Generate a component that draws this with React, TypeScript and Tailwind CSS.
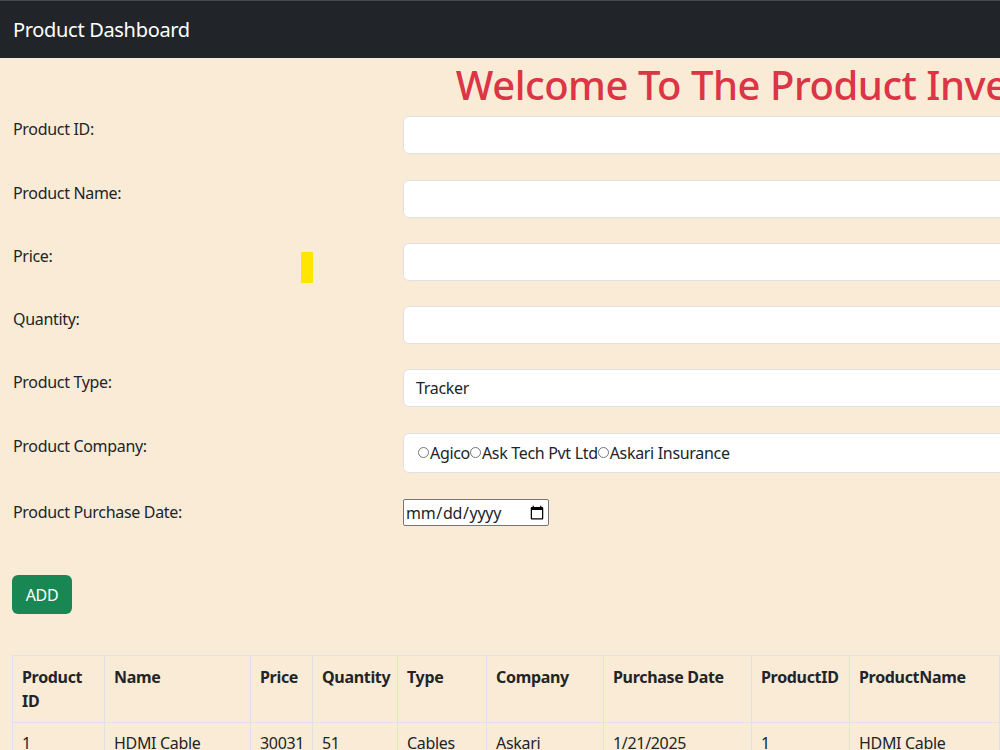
import React from 'react';

interface Product {
  id: number;
  name: string;
  price: number;
  quantity: number;
  type: string;
  company: string;
  date: string;
}

const products: Product[] = [
  { id: 1, name: 'HDMI Cable', price: 30031, quantity: 51, type: 'Cables', company: 'Askari', date: '1/21/2025' },
];

const fields = ['Product ID:', 'Product Name:', 'Price:', 'Quantity:'];

const companies = ['Agico', 'Ask Tech Pvt Ltd', 'Askari Insurance'];

const headers = [
  'Product ID', 'Name', 'Price', 'Quantity', 'Type', 'Company', 'Purchase Date',
  'ProductID', 'ProductName', 'ProductPrice', 'ProductQuantity', 'Actions',
];

export default function App() {
  return (
    <div
      className="w-screen h-screen overflow-hidden bg-[#faebd7] text-[#212529] tracking-[-0.02em]"
      style={{ fontFamily: '"Noto Sans", "Open Sans", sans-serif' }}
    >
      <div className="w-[1564px]">
        <nav className="h-[58px] bg-[#212529] border-t border-[#45484d] flex items-center px-[13px] pt-px">
          <span className="text-white text-[20px] leading-[30px]">Product Dashboard</span>
        </nav>

        <div className="px-3">
          <h1 className="text-center text-[#dc3545] text-[40px] leading-[48px] font-medium mt-[3px] mb-[7px] tracking-[-0.012em]">
            Welcome To The Product Inventory
          </h1>

          {fields.map((label, i) => (
            <div key={label} className={`flex items-start ${i === 0 ? 'mb-[26px]' : 'mb-[25px]'}`}>
              <div className="w-[391px] grid grid-cols-[289px_12px] text-[16px] leading-6 pt-[1px]">
                <label className="pl-px">{label}</label>
                {i === 2 && <div className="bg-[#ffe600] h-[31px] mt-[8px] -mb-[16px]" />}
              </div>
              <input
                type="text"
                className="flex-1 h-[38px] bg-white border border-[#dee2e6] rounded-md px-3 text-[16px] outline-none"
              />
            </div>
          ))}

          <div className="flex items-start mb-[26px]">
            <div className="w-[391px] text-[16px] leading-6 pt-[1px] pl-px">Product Type:</div>
            <div className="flex-1 h-[38px] bg-white border border-[#dee2e6] rounded-md px-3 text-[16px] flex items-center">
              Tracker
            </div>
          </div>

          <div className="flex items-start mb-[26px]">
            <div className="w-[391px] text-[16px] leading-6 pt-[1px] pl-px">Product Company:</div>
            <div className="flex-1 h-[40px] bg-white border border-[#dee2e6] rounded-md px-[14px] text-[16px] flex items-center">
              {companies.map((c) => (
                <label key={c} className="flex items-center">
                  <span className="inline-block w-[11px] h-[11px] rounded-full border border-[#767676] bg-white -mt-[2px] mr-px" />
                  <span>{c}</span>
                </label>
              ))}
            </div>
          </div>

          <div className="flex items-start">
            <div className="w-[391px] text-[16px] leading-6 pt-[1px] pl-px">Product Purchase Date:</div>
            <input
              type="date"
              className="w-[146px] h-[27px] bg-white border border-[#767676] rounded-[2px] px-px text-[16px]"
            />
          </div>

          <button className="mt-[49px] h-[39px] bg-[#198754] text-white text-[16px] leading-6 rounded-md w-[60px]">
            ADD
          </button>

          <table className="mt-[41px] border-collapse table-fixed text-[16px] leading-6 w-[1540px]">
            <colgroup>
              <col className="w-[92px]" />
              <col className="w-[146px]" />
              <col className="w-[62px]" />
              <col className="w-[85px]" />
              <col className="w-[89px]" />
              <col className="w-[117px]" />
              <col className="w-[148px]" />
              <col className="w-[98px]" />
              <col className="w-[150px]" />
              <col className="w-[120px]" />
              <col className="w-[140px]" />
              <col />
            </colgroup>
            <thead>
              <tr className="text-left align-top">
                {headers.map((h) => (
                  <th key={h} className="border border-[#dde3ea] px-[9px] pt-[9px] pb-2 font-bold h-[67px]">
                    {h}
                  </th>
                ))}
              </tr>
            </thead>
            <tbody>
              {products.map((p) => (
                <tr key={p.id}>
                  <td className="border border-[#dde3ea] px-[9px] py-2">{p.id}</td>
                  <td className="border border-[#dde3ea] px-[9px] py-2">{p.name}</td>
                  <td className="border border-[#dde3ea] px-[9px] py-2">{p.price}</td>
                  <td className="border border-[#dde3ea] px-[9px] py-2">{p.quantity}</td>
                  <td className="border border-[#dde3ea] px-[9px] py-2">{p.type}</td>
                  <td className="border border-[#dde3ea] px-[9px] py-2">{p.company}</td>
                  <td className="border border-[#dde3ea] px-[9px] py-2">{p.date}</td>
                  <td className="border border-[#dde3ea] px-[9px] py-2">{p.id}</td>
                  <td className="border border-[#dde3ea] px-[9px] py-2">{p.name}</td>
                  <td className="border border-[#dde3ea] px-[9px] py-2">{p.price}</td>
                  <td className="border border-[#dde3ea] px-[9px] py-2">{p.quantity}</td>
                  <td className="border border-[#dde3ea] px-[9px] py-2" />
                </tr>
              ))}
            </tbody>
          </table>
        </div>
      </div>
    </div>
  );
}
